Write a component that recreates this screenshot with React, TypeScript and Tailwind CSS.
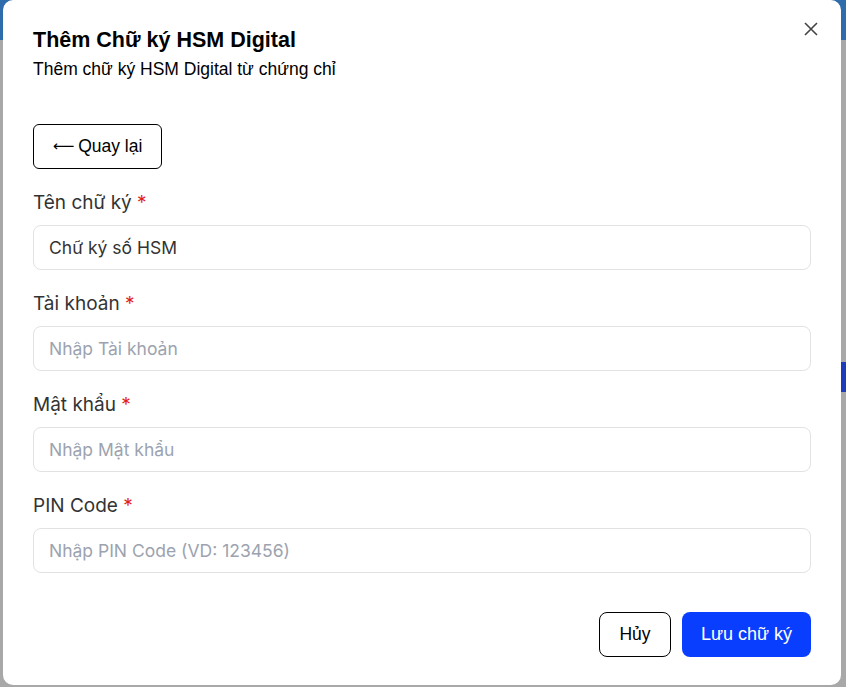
import type { ReactNode } from "react";

const fields = [
  { label: "Tên chữ ký", value: "Chữ ký số HSM", placeholder: "" },
  { label: "Tài khoản", value: "", placeholder: "Nhập Tài khoản" },
  { label: "Mật khẩu", value: "", placeholder: "Nhập Mật khẩu" },
  { label: "PIN Code", value: "", placeholder: "Nhập PIN Code (VD: 123456)" },
];

function Field({ label, children }: { label: string; children: ReactNode }) {
  return (
    <div className="flex flex-col gap-[10px]">
      <label className="text-[19px] leading-6 text-[#333333]" style={{ fontFamily: "Inter, sans-serif" }}>
        {label} <span className="text-[#e11d1d]">*</span>
      </label>
      {children}
    </div>
  );
}

export default function App() {
  return (
    <div className="relative h-[687px] w-full overflow-hidden bg-[#a8a8a8]">
      {/* page behind the overlay */}
      <div className="h-[40px] w-full bg-[#2f6cab]" />
      <div className="mt-[322px] flex justify-end">
        <div className="h-[30px] w-[60px] bg-[#1c3cbc]" />
      </div>

      <div
        className="absolute left-[3px] top-0 flex h-[685px] w-[838px] flex-col rounded-[10px] bg-white px-[30px] pt-[26px]"
        style={{ fontFamily: '"Liberation Sans", Arial, sans-serif' }}
      >
        <button type="button" className="absolute right-[22px] top-[21px] text-[#444]">
          <svg width="16" height="16" viewBox="0 0 16 16" fill="none" stroke="currentColor" strokeWidth="1.6">
            <path d="M2 2L14 14M14 2L2 14" />
          </svg>
        </button>

        <h2 className="text-[21.5px] font-bold leading-7 text-black">Thêm Chữ ký HSM Digital</h2>
        <p className="mt-[3px] text-[17.5px] leading-6 text-black">Thêm chữ ký HSM Digital từ chứng chỉ</p>

        <div className="mt-[43px]">
          <button
            type="button"
            className="flex h-[45px] w-[129px] items-center justify-center gap-[4px] rounded-[6px] border border-black text-[17.5px] text-black"
          >
            <span style={{ fontFamily: '"DejaVu Sans", sans-serif' }} className="text-[15px] leading-none">
              ⟵
            </span>
            <span>Quay lại</span>
          </button>
        </div>

        <div className="mt-[22px] flex flex-col gap-[22px]">
          {fields.map((f) => (
            <Field key={f.label} label={f.label}>
              <input
                className="h-[45px] w-full rounded-[8px] border border-[#e2e2e2] px-[15px] text-[17.5px] text-[#333] placeholder:text-[#9ca3af] outline-none"
                style={{ fontFamily: "Inter, sans-serif" }}
                defaultValue={f.value}
                placeholder={f.placeholder}
              />
            </Field>
          ))}
        </div>

        <div className="mt-[39px] flex justify-end gap-[11px]">
          <button type="button" className="h-[45px] w-[72px] rounded-[8px] border border-black text-[17.5px] text-black">
            Hủy
          </button>
          <button type="button" className="h-[45px] w-[129px] rounded-[8px] bg-[#0a3eff] text-[18px] text-white">
            Lưu chữ ký
          </button>
        </div>
      </div>
    </div>
  );
}
